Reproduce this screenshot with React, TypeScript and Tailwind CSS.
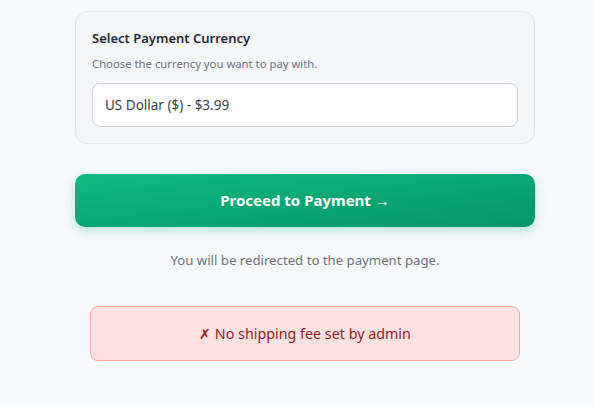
import React from 'react';

const App: React.FC = () => {
    return (
        <div className="min-h-screen bg-[#f8f9fb] pt-[11px] pl-[75px]" style={{ fontFamily: '"Noto Sans", sans-serif' }}>
            <div className="w-[460px]">
                <div className="rounded-xl border border-[#e5e7eb] bg-[#f6f7f9] p-4">
                    <h3 className="text-[13px] font-semibold leading-5 text-[#1f2937]">Select Payment Currency</h3>
                    <p className="mt-[8px] text-[11.3px] leading-4 text-[#6b7280]">Choose the currency you want to pay with.</p>
                    <div className="mt-[11px] flex h-11 items-center rounded-lg border border-[#d1d5db] bg-white px-3 text-[13.5px] text-[#374151]">
                        US Dollar ($) - $3.99
                    </div>
                </div>

                <button className="mt-[30px] flex h-[53px] w-full items-center justify-center rounded-[10px] bg-gradient-to-br from-[#10b981] to-[#059669] text-[15px] font-bold text-white shadow-[0_4px_12px_rgba(16,185,129,0.3)]">
                    Proceed to Payment →
                </button>

                <p className="mt-[23px] text-center text-[13.2px] leading-5 text-[#6b7280]">
                    You will be redirected to the payment page.
                </p>

                <div className="mx-[15px] mt-[36px] flex h-[55px] items-center justify-center rounded-lg border border-[#fca5a5] bg-[#fee2e2] text-[14.3px] text-[#991b1b]">
                    ✗ No shipping fee set by admin
                </div>
            </div>
        </div>
    );
};

export default App;
